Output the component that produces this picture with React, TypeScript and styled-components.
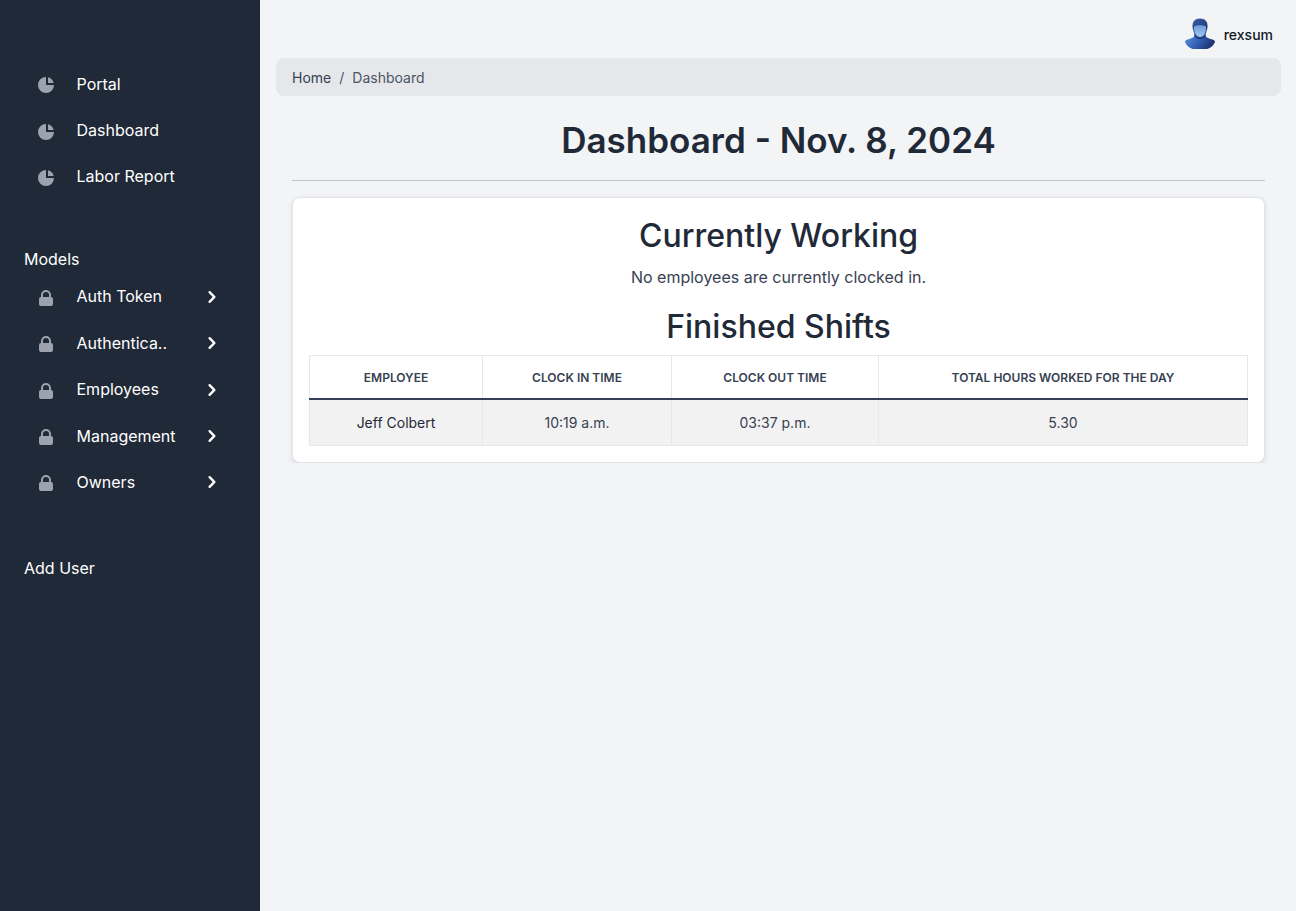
import React from "react";
import styled, { createGlobalStyle } from "styled-components";

const Global = createGlobalStyle`
  *, *::before, *::after { box-sizing: border-box; }
  body {
    margin: 0;
    background: #f2f4f6;
    color: #374151;
    font-family: Inter, "Liberation Sans", sans-serif;
    font-size: 16px;
    line-height: 24px;
  }
`;

const Page = styled.div`
  display: flex;
  min-height: 100vh;
`;

const Sidebar = styled.nav`
  flex: 0 0 260px;
  background: #1f2937;
  color: #fff;
  padding: 60.9px 24px 0;
`;

const NavList = styled.ul<{ $rowHeight: number }>`
  list-style: none;
  margin: 0;
  padding: 0;
  display: grid;
  grid-auto-rows: ${(p) => p.$rowHeight}px;
`;

const NavItem = styled.li`
  display: flex;
  align-items: center;
  padding: 0 0 0 12px;
`;

const NavIcon = styled.svg`
  width: 20px;
  height: 20px;
  margin: 3px 20.5px 0 0;
  fill: #9ca3af;
`;

const NavLabel = styled.span`
  flex: 1;
`;

const Chevron = styled.svg`
  width: 24px;
  height: 24px;
  margin: 0.9px 12.5px 0 0;
  fill: #fff;
`;

const SectionLabel = styled.div<{ $top: number; $bottom?: number }>`
  margin: ${(p) => p.$top}px 0 ${(p) => p.$bottom ?? 0}px;
`;

const Main = styled.main`
  flex: 1;
  min-width: 0;
  padding: 0 15px 0 16px;
`;

const TopBar = styled.header`
  height: 58px;
  padding: 12px 8px 0 0;
  display: flex;
  justify-content: flex-end;
  align-items: center;
  gap: 8px;
`;

const Avatar = styled.svg`
  width: 32px;
  height: 32px;
  margin-top: -2px;
`;

const UserName = styled.span`
  color: #111827;
  font-size: 14px;
  font-weight: 500;
`;

const Breadcrumb = styled.div`
  display: flex;
  align-items: center;
  gap: 8px;
  height: 38px;
  padding: 2px 16px 0;
  border-radius: 8px;
  background: #e5e7eb;
  font-size: 14px;
  color: #4b5563;
`;

const Crumb = styled.span<{ $link?: boolean }>`
  color: ${(p) => (p.$link ? "#374151" : "#4b5563")};
`;

const Content = styled.section`
  padding: 0 16px;
  text-align: center;
`;

const Title = styled.h1`
  margin: 0;
  padding: 22px 0 17px;
  border-bottom: 1px solid #c0c4cf;
  color: #1f2937;
  font-size: 35px;
  font-weight: 600;
  line-height: 45px;
`;

const Card = styled.div`
  margin-top: 16px;
  padding: 17px 16px 16px;
  height: 266px;
  background: #fff;
  border: 1px solid #e1e3e6;
  border-radius: 8px;
  box-shadow: 0 2px 5px rgba(38, 43, 64, 0.12);
  clip-path: inset(-6px -6px 0 -6px);
`;

const CardHeading = styled.h2`
  margin: 0;
  color: #1f2937;
  font-size: 32px;
  font-weight: 500;
  line-height: 41px;
`;

const Note = styled.p`
  margin: 9px 0 17px;
`;

const Table = styled.table`
  width: 939px;
  height: 91px;
  margin-top: 8px;
  table-layout: fixed;
  border-collapse: collapse;
  font-size: 14px;
  line-height: 20px;
`;

const HeadCell = styled.th<{ $width: number }>`
  width: ${(p) => p.$width}px;
  height: 43px;
  padding: 2px 0 0;
  border: 1px solid #e5e7eb;
  border-bottom: 2px solid #334057;
  font-size: 12px;
  font-weight: 600;
  text-transform: uppercase;
`;

const Cell = styled.td<{ $strong?: boolean }>`
  height: 47px;
  padding: 1px 0 0;
  border: 1px solid #e5e7eb;
  background: #f2f2f2;
  color: ${(p) => (p.$strong ? "#1f2937" : "#374151")};
`;

const PieIcon = () => (
  <NavIcon viewBox="0 0 20 20">
    <path d="M2 10a8 8 0 018-8v8h8a8 8 0 11-16 0z" />
    <path d="M12 2.252A8.014 8.014 0 0117.748 8H12V2.252z" />
  </NavIcon>
);

const LockIcon = () => (
  <NavIcon viewBox="0 0 20 20">
    <path
      fillRule="evenodd"
      d="M5 9V7a5 5 0 0110 0v2a2 2 0 012 2v5a2 2 0 01-2 2H5a2 2 0 01-2-2v-5a2 2 0 012-2zm8-2v2H7V7a3 3 0 016 0z"
    />
  </NavIcon>
);

const ChevronIcon = () => (
  <Chevron viewBox="0 0 20 20">
    <path d="M7.293 14.707a1 1 0 010-1.414L10.586 10 7.293 6.707a1 1 0 011.414-1.414l4 4a1 1 0 010 1.414l-4 4a1 1 0 01-1.414 0z" />
  </Chevron>
);

const UserAvatar = () => (
  <Avatar viewBox="0 0 32 32">
    <defs>
      <linearGradient id="body" x1="0" y1="0.2" x2="1" y2="0.6">
        <stop offset="0" stopColor="#5a90dc" />
        <stop offset="0.5" stopColor="#3361b4" />
        <stop offset="1" stopColor="#1d2f6c" />
      </linearGradient>
      <linearGradient id="hair" x1="0" y1="0" x2="1" y2="1">
        <stop offset="0" stopColor="#3a5ea6" />
        <stop offset="1" stopColor="#1e3272" />
      </linearGradient>
      <linearGradient id="face" x1="0" y1="0" x2="0" y2="1">
        <stop offset="0" stopColor="#6f9bd8" />
        <stop offset="1" stopColor="#9cc8f5" />
      </linearGradient>
    </defs>
    <path fill="url(#body)" d="M10.500 17C10.500 20 6 20.800 3.500 21.600 1.500 22.300.9 23.200 1 24 3 28.500 7 31 10 31h12c3 0 7-2.500 9-7 .1-.8-.6-1.700-2.500-2.400C26 20.800 21.500 20 21.500 17V14h-11z" />
    <path fill="#233c80" d="M10.500 14h11v3.500c0 2-3 3.500-5.500 3.500s-5.500-1.500-5.500-3.500z" />
    <path fill="url(#hair)" d="M8.500 9.500C8 3.500 11 .5 16 .5s8 3 7.500 9L22 15H10z" />
    <path fill="url(#face)" d="M10 8.500c2-.8 3.800-1.300 6-1.300s4 .5 6 1.300c.3 6-2 10.500-6 10.500s-6.300-4.500-6-10.500z" />
  </Avatar>
);

const pages = ["Portal", "Dashboard", "Labor Report"];
const models = ["Auth Token", "Authentica..", "Employees", "Management", "Owners"];
const columns = [
  { label: "Employee", width: 173 },
  { label: "Clock in time", width: 189 },
  { label: "Clock out time", width: 207 },
  { label: "Total hours worked for the day", width: 369 },
];
const shifts = [["Jeff Colbert", "10:19 a.m.", "03:37 p.m.", "5.30"]];

export default function App() {
  return (
    <>
      <Global />
      <Page>
        <Sidebar>
          <NavList $rowHeight={46.1}>
            {pages.map((name) => (
              <NavItem key={name}>
                <PieIcon />
                <NavLabel>{name}</NavLabel>
              </NavItem>
            ))}
          </NavList>
          <SectionLabel $top={47.8} $bottom={2}>Models</SectionLabel>
          <NavList $rowHeight={46.45}>
            {models.map((name) => (
              <NavItem key={name}>
                <LockIcon />
                <NavLabel>{name}</NavLabel>
                <ChevronIcon />
              </NavItem>
            ))}
          </NavList>
          <SectionLabel $top={50.75}>Add User</SectionLabel>
        </Sidebar>
        <Main>
          <TopBar>
            <UserAvatar />
            <UserName>rexsum</UserName>
          </TopBar>
          <Breadcrumb>
            <Crumb $link>Home</Crumb>
            <span>/</span>
            <Crumb>Dashboard</Crumb>
          </Breadcrumb>
          <Content>
            <Title>Dashboard - Nov. 8, 2024</Title>
            <Card>
              <CardHeading>Currently Working</CardHeading>
              <Note>No employees are currently clocked in.</Note>
              <CardHeading>Finished Shifts</CardHeading>
              <Table>
                <thead>
                  <tr>
                    {columns.map((c) => (
                      <HeadCell key={c.label} $width={c.width}>{c.label}</HeadCell>
                    ))}
                  </tr>
                </thead>
                <tbody>
                  {shifts.map((row) => (
                    <tr key={row[0]}>
                      {row.map((value, i) => (
                        <Cell key={i} $strong={i === 0}>{value}</Cell>
                      ))}
                    </tr>
                  ))}
                </tbody>
              </Table>
            </Card>
          </Content>
        </Main>
      </Page>
    </>
  );
}
